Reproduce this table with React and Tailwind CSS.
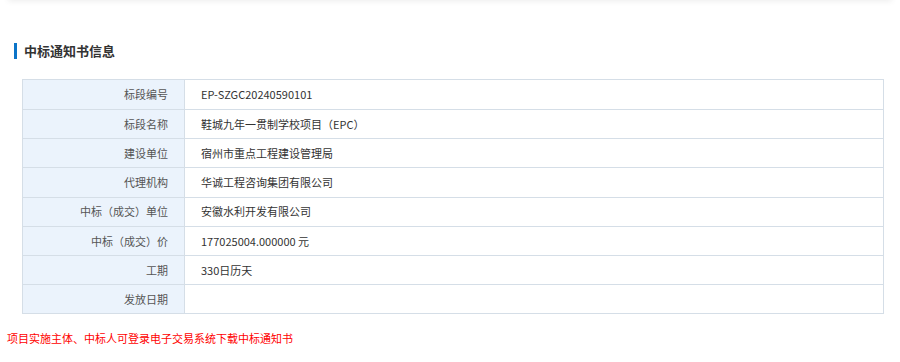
import React from "react";

const rows = [
  ["标段编号", "EP-SZGC20240590101"],
  ["标段名称", "鞋城九年一贯制学校项目（EPC）"],
  ["建设单位", "宿州市重点工程建设管理局"],
  ["代理机构", "华诚工程咨询集团有限公司"],
  ["中标（成交）单位", "安徽水利开发有限公司"],
  ["中标（成交）价", "177025004.000000 元"],
  ["工期", "330日历天"],
  ["发放日期", ""],
];

export default function App() {
  return (
    <div
      className="relative w-[900px] h-[362px] overflow-hidden bg-white text-[#333]"
      style={{ fontFamily: '"Noto Sans CJK SC", "Noto Sans", sans-serif' }}
    >
      <div className="absolute left-[8px] right-[8px] top-[-20px] h-[20px] bg-white shadow-[0_1px_6px_rgba(0,0,0,0.08)]" />
      <div className="pt-[42px] pl-[14px]">
        <div className="flex items-center h-[17px]">
          <div className="w-[3px] h-[16px] bg-[#0b74c8]" />
          <span className="ml-[7px] text-[13px] font-bold leading-none text-[#333]">中标通知书信息</span>
        </div>
      </div>
      <div className="ml-[22px] mt-[20px] w-[862px] border border-[#d5dee7]">
        {rows.map(([k, v], i) => (
          <div
            key={i}
            className={`flex h-[29.15px] ${i > 0 ? "border-t border-[#d5dee7]" : ""}`}
          >
            <div className="w-[162px] shrink-0 bg-[#ebf3fc] border-r border-[#d5dee7] flex items-center justify-end pr-[16px] text-[11px] text-[#555]">
              {k}
            </div>
            <div className="flex-1 flex items-center pl-[16px] text-[11px] text-[#333]">{v}</div>
          </div>
        ))}
      </div>
      <div className="mt-[16px] pl-[7px] text-[11px] text-[#ff0000]">
        项目实施主体、中标人可登录电子交易系统下载中标通知书
      </div>
    </div>
  );
}
